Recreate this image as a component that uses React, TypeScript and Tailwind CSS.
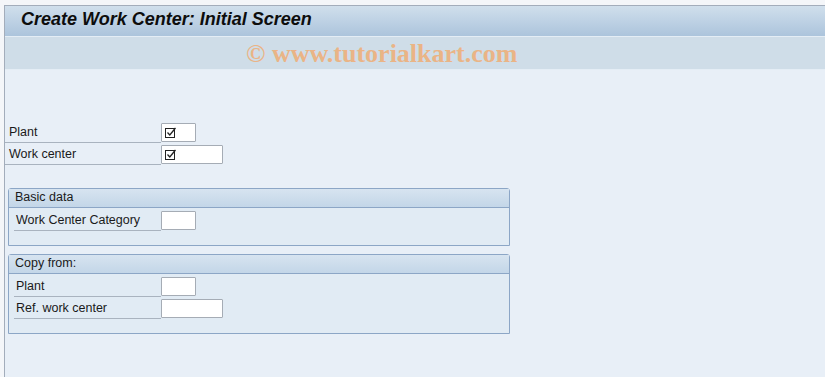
import React from 'react'

const font = { fontFamily: '"Liberation Sans", Arial, sans-serif' }

function CheckMark() {
  return (
    <svg width="11" height="11" viewBox="0 0 11 11" className="block">
      <rect x="0.5" y="1.5" width="9" height="9" fill="none" stroke="#222" strokeWidth="1" />
      <path d="M2.5 5.5 L4.8 8 L10.5 1" fill="none" stroke="#222" strokeWidth="1.3" />
    </svg>
  )
}

function Field({ width, required }: { width: number; required?: boolean }) {
  return (
    <div
      className="h-[19px] bg-white border border-[#a5acb5] rounded-[1px] flex items-center pl-[3px]"
      style={{ width }}
    >
      {required && <CheckMark />}
    </div>
  )
}

function Row({ label, width, required, labelWidth, pl }: { label: string; width: number; required?: boolean; labelWidth: number; pl: string }) {
  return (
    <div className="flex items-end h-[22px]">
      <div
        className={`h-[20px] border-b border-[#a9b3bf] text-[12.5px] text-[#1a1a1a] leading-[19px] ${pl}`}
        style={{ width: labelWidth }}
      >
        {label}
      </div>
      <div className="pb-[1px]">
        <Field width={width} required={required} />
      </div>
    </div>
  )
}

function Group({ title, children }: { title: string; children: React.ReactNode }) {
  return (
    <div className="ml-[3px] w-[502px] border border-[#8ca6c6] rounded-t-[3px] bg-[#e1ebf4]">
      <div className="h-[19px] bg-gradient-to-b from-[#d7e4f0] to-[#c3d6e8] border-b border-[#8ca6c6] text-[12.5px] leading-[17px] pl-[6px] text-[#1a1a1a]">
        {title}
      </div>
      <div className="pl-[5px] pt-[1px]">{children}</div>
    </div>
  )
}

export default function App() {
  return (
    <div className="w-[825px] h-[377px] bg-[#f4f6f9] pt-[5px] pl-[4px] overflow-hidden" style={font}>
      <div className="h-[372px] border-l border-t border-[#a3adbb] bg-[#e8eff7] flex flex-col">
        <div className="h-[30px] bg-gradient-to-b from-[#d0dfec] to-[#acc4dc] flex items-center pl-[16px] pb-[3px]">
          <span className="text-[18px] font-bold italic text-[#0d0d0d]">
            Create Work Center: Initial Screen
          </span>
        </div>
        <div className="h-[34px] bg-[#cfdde8] border-t border-[#e4edf5] border-b border-[#a8b4c2] flex items-center pl-[241px]">
          <span
            className="text-[26px] font-bold text-[#eab486]"
            style={{ fontFamily: '"Liberation Serif", serif' }}
          >
            © www.tutorialkart.com
          </span>
        </div>
        <div className="pt-[51px]">
          <Row label="Plant" width={35} required labelWidth={156} pl="pl-[4px]" />
          <Row label="Work center" width={62} required labelWidth={156} pl="pl-[4px]" />
        </div>
        <div className="mt-[23px]">
          <Group title="Basic data">
            <div className="h-[36px]">
              <Row label="Work Center Category" width={35} labelWidth={147} pl="pl-[2px]" />
            </div>
          </Group>
        </div>
        <div className="mt-[8px]">
          <Group title="Copy from:">
            <div className="h-[58px]">
              <Row label="Plant" width={35} labelWidth={147} pl="pl-[2px]" />
              <Row label="Ref. work center" width={62} labelWidth={147} pl="pl-[2px]" />
            </div>
          </Group>
        </div>
      </div>
    </div>
  )
}
